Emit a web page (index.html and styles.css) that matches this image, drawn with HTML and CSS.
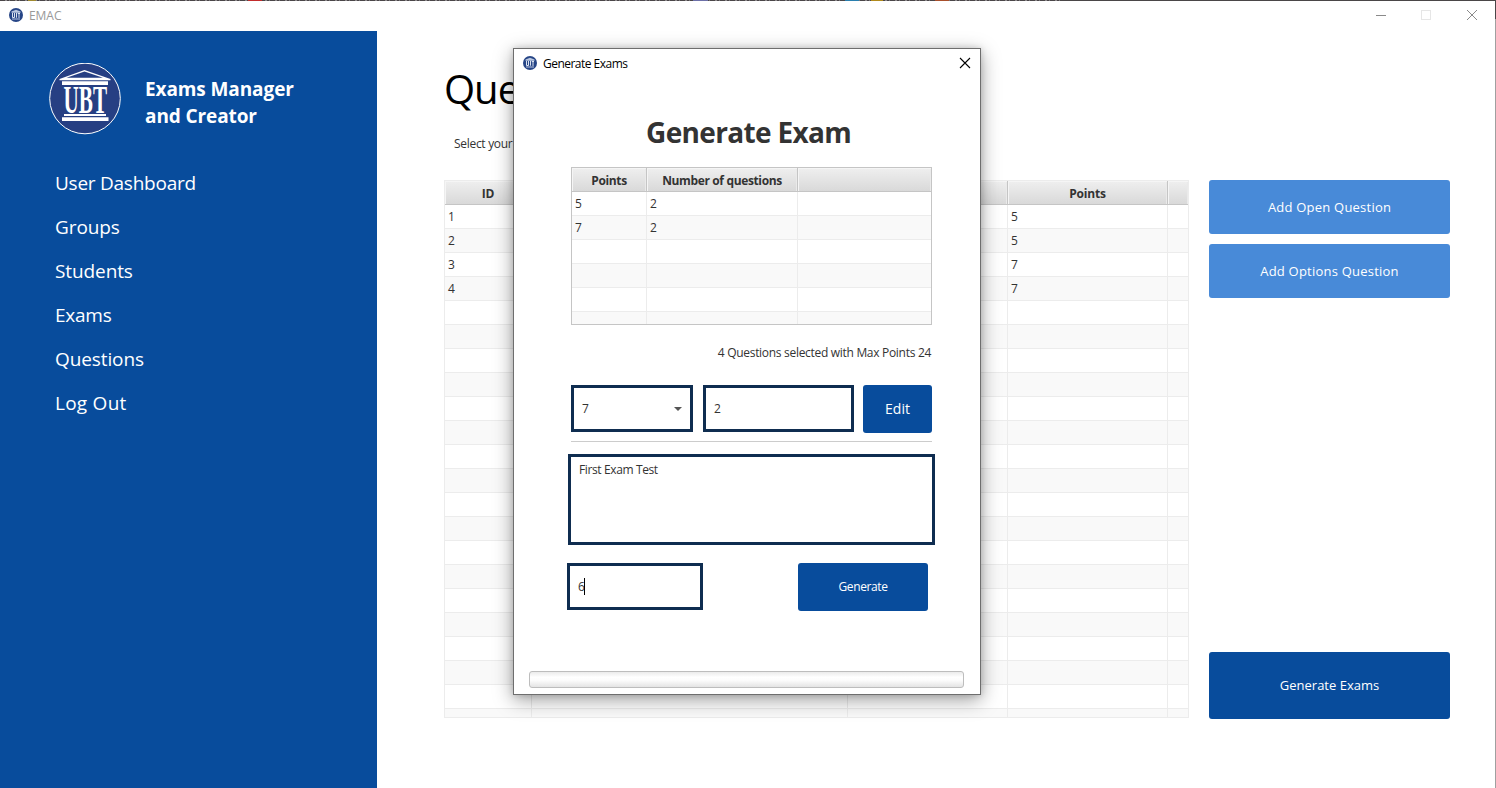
FILE: index.html
```
<!DOCTYPE html>
<html lang="en">
<head>
<meta charset="utf-8">
<title>EMAC</title>
<link rel="stylesheet" href="styles.css">
</head>
<body>
<svg width="0" height="0" class="defs">
  <symbol id="mini" viewBox="0 0 14 14">
    <circle cx="7" cy="7" r="7" fill="#264586"/>
    <path fill="#b9c6df" d="M2.500 3.600 7 1.800 11.500 3.600V4.800H2.500ZM3 10.400H11V11.600H3Z"/>
    <path stroke="#dbe3f0" fill="none" d="M3.500 5V9.500H5.500V5M7.500 4.800V9.700M8.800 5.500H11M10 5V10"/>
  </symbol>
</svg>
<div class="window">
  <header class="titlebar">
    <svg class="mini"><use href="#mini"/></svg>
    <span class="app-name">EMAC</span>
    <svg class="controls" width="104" height="12" viewBox="0 0 104 12" fill="none">
      <path stroke="#8a8a8a" d="M1 6.500H11"/>
      <rect x="46.500" y="1.500" width="9" height="9" stroke="#e6e6e6"/>
      <path stroke="#8a8a8a" d="M92 1 102 11M102 1 92 11"/>
    </svg>
  </header>
  <div class="content">
    <aside class="sidebar">
      <div class="brand">
        <svg class="logo" viewBox="0 0 72 72">
          <circle cx="36" cy="35.500" r="35.300" fill="#263f83" stroke="#fff" stroke-width="1"/>
          <path fill="#fff" fill-rule="evenodd" d="M10.500 16 35.500 7 61.500 16V17.300H10.500ZM17.500 14.800H54L35.500 8.600Z"/>
          <path fill="#fff" d="M13 18.200H59V22H13ZM15 51H57V53H15ZM13 54.200H59.500V58H13Z"/>
          <text x="14.500" y="49.700" class="logo-text" textLength="43.500" lengthAdjust="spacingAndGlyphs">UBT</text>
        </svg>
        <div class="brand-name">Exams Manager<br>and Creator</div>
      </div>
      <nav class="menu">
        <a class="wide">User Dashboard</a><a>Groups</a><a>Students</a><a class="wide">Exams</a><a>Questions</a><a class="loose">Log Out</a>
      </nav>
    </aside>
    <main class="main">
      <h1>Questions</h1>
      <p class="hint">Select your</p>
      <div class="body">
        <div class="table big">
          <div class="thead"><div>ID</div><div></div><div></div><div>Points</div><div></div></div>
          <div class="tr"><div>1</div><div></div><div></div><div>5</div><div></div></div>
          <div class="tr"><div>2</div><div></div><div></div><div>5</div><div></div></div>
          <div class="tr"><div>3</div><div></div><div></div><div>7</div><div></div></div>
          <div class="tr"><div>4</div><div></div><div></div><div>7</div><div></div></div>
          <div class="tr"><div></div><div></div><div></div><div></div><div></div></div>
          <div class="tr"><div></div><div></div><div></div><div></div><div></div></div>
          <div class="tr"><div></div><div></div><div></div><div></div><div></div></div>
          <div class="tr"><div></div><div></div><div></div><div></div><div></div></div>
          <div class="tr"><div></div><div></div><div></div><div></div><div></div></div>
          <div class="tr"><div></div><div></div><div></div><div></div><div></div></div>
          <div class="tr"><div></div><div></div><div></div><div></div><div></div></div>
          <div class="tr"><div></div><div></div><div></div><div></div><div></div></div>
          <div class="tr"><div></div><div></div><div></div><div></div><div></div></div>
          <div class="tr"><div></div><div></div><div></div><div></div><div></div></div>
          <div class="tr"><div></div><div></div><div></div><div></div><div></div></div>
          <div class="tr"><div></div><div></div><div></div><div></div><div></div></div>
          <div class="tr"><div></div><div></div><div></div><div></div><div></div></div>
          <div class="tr"><div></div><div></div><div></div><div></div><div></div></div>
          <div class="tr"><div></div><div></div><div></div><div></div><div></div></div>
          <div class="tr"><div></div><div></div><div></div><div></div><div></div></div>
          <div class="tr"><div></div><div></div><div></div><div></div><div></div></div>
          <div class="tr"><div></div><div></div><div></div><div></div><div></div></div>
        </div>
        <div class="actions">
          <div class="btn light">Add Open Question</div>
          <div class="btn light">Add Options Question</div>
          <div class="btn dark">Generate Exams</div>
        </div>
      </div>
    </main>
  </div>
</div>
<section class="dialog">
  <header class="dialog-bar">
    <svg class="mini"><use href="#mini"/></svg>
    <span class="dialog-title">Generate Exams</span>
    <svg class="close" width="12" height="12" viewBox="0 0 12 12"><path stroke="#000" stroke-width="1.100" d="M1 1 11 11M11 1 1 11"/></svg>
  </header>
  <h2>Generate Exam</h2>
  <div class="table small">
    <div class="thead"><div>Points</div><div>Number of questions</div><div></div></div>
    <div class="tr"><div>5</div><div>2</div><div></div></div>
    <div class="tr"><div>7</div><div>2</div><div></div></div>
    <div class="tr"><div></div><div></div><div></div></div>
    <div class="tr"><div></div><div></div><div></div></div>
    <div class="tr"><div></div><div></div><div></div></div>
    <div class="tr"><div></div><div></div><div></div></div>
  </div>
  <p class="summary">4 Questions selected with Max Points 24</p>
  <div class="edit-row">
    <div class="field combo">7<svg width="8" height="4" viewBox="0 0 8 4"><path fill="#555" d="M0 0H8L4 4Z"/></svg></div>
    <div class="field count">2</div>
    <div class="btn edit">Edit</div>
  </div>
  <div class="area">First Exam Test</div>
  <div class="gen-row">
    <div class="field number">6<i class="caret"></i></div>
    <div class="btn gen">Generate</div>
  </div>
  <div class="progress"></div>
</section>
</body>
</html>
```
FILE: styles.css
```
* { box-sizing: border-box; }
body { margin: 0; width: 1496px; height: 788px; overflow: hidden; font: 12px/16px "Open Sans", "Noto Sans", sans-serif; color: #333; background: #fff; }
h1, h2, p { margin: 0; }
.defs { position: absolute; }
.window {
  width: 1496px; height: 788px; padding: 1px 1px 0 0; display: flex; flex-direction: column;
  background:
    linear-gradient(90deg, transparent 28px, #a08a30 28px 36px, transparent 36px 248px, #c22c2c 248px 262px, transparent 262px 693px, #6d70a8 693px 708px, transparent 708px 845px, #2a7fae 845px 859px, transparent 859px 871px, #b08a1c 871px 883px, transparent 883px 935px, #a8502c 935px 949px, transparent 949px) 0 0 / 100% 1px no-repeat,
    repeating-linear-gradient(90deg, #4a4648 0 5px, #8b8789 5px 7px, #4a4648 7px 9px, #77757a 9px 10px) 0 0 / 1062px 1px no-repeat,
    linear-gradient(#4a4648, #4a4648) 0 0 / 100% 1px no-repeat,
    linear-gradient(#4a4648 19px, #a0a0a0 19px) 100% 0 / 1px 100% no-repeat,
    #fff;
}
.titlebar { height: 30px; flex: none; display: flex; align-items: center; padding: 0 16px 2px 9px; }
.mini { width: 14px; height: 14px; flex: none; }
.app-name { margin: 2px 0 0 6px; color: #999; letter-spacing: -.05px; }
.controls { margin-left: auto; }
.content { flex: 1; display: flex; min-height: 0; }
.sidebar { width: 377px; background: #084c9c; color: #fff; padding: 32px 0 0 49px; }
.brand { display: flex; gap: 24px; height: 72px; }
.logo { width: 72px; height: 72px; flex: none; }
.logo-text { font: bold 40px "Liberation Serif", serif; fill: #fff; }
.brand-name { font-size: 19px; font-weight: 700; line-height: 27px; padding-top: 13px; white-space: nowrap; letter-spacing: -.1px; }
.menu { display: flex; flex-direction: column; padding: 26px 0 0 6px; }
.menu a { height: 44px; line-height: 44px; font-size: 19px; letter-spacing: -.1px; }
.menu .wide { letter-spacing: -.25px; }
.menu .loose { letter-spacing: .25px; }
.main { flex: 1; padding: 29px 45px 0 67px; }
h1 { font-size: 40px; line-height: 58px; font-weight: 400; color: #000; letter-spacing: -1px; }
.hint { padding: 17px 0 0 10px; height: 62px; line-height: 18px; letter-spacing: -.3px; }
.body { display: flex; gap: 20px; }
.table { overflow: hidden; border: 1px solid #ececec; }
.thead, .tr { display: grid; }
.thead { height: 24px; grid-template-rows: 23px; background: #c5c5c5; font-weight: 700; text-align: center; letter-spacing: -.3px; }
.thead div { height: 23px; background: linear-gradient(#efefef, #d9d9d9); box-shadow: inset 1px 1px #f5f5f5, inset -1px 0 #eaeaea; border-right: 1px solid #c5c5c5; line-height: 25px; white-space: nowrap; }
.thead div:last-child, .tr div:last-child { border-right: 0; }
.tr { height: 24px; border-bottom: 1px solid #ececec; background: #fff; }
.tr:nth-child(odd) { background: #f9f9f9; }
.tr div { height: 23px; border-right: 1px solid #ececec; padding-left: 3px; line-height: 24px; }
.big { width: 745px; height: 538px; }
.big .thead, .big .tr { grid-template-columns: 87px 316px 160px 160px 20px; }
.big .thead { letter-spacing: -.2px; }
.small { width: 361px; height: 158px; border-color: #c5c5c5; margin: 18px 0 0 57px; }
.small .thead, .small .tr { grid-template-columns: 75px 151px 133px; }
.small .thead { letter-spacing: -.36px; }
.actions { width: 241px; height: 539px; display: flex; flex-direction: column; gap: 10px; }
.btn { display: flex; align-items: center; justify-content: center; border-radius: 3px; color: #fff; background: #084c9c; }
.actions .btn { height: 54px; font-size: 13px; }
.actions .light { background: #488ad8; letter-spacing: .22px; }
.actions .dark { height: 67px; margin-top: auto; padding-bottom: 2px; }
.dialog { position: absolute; left: 513px; top: 48px; width: 468px; height: 647px; background: #fff; border: 1px solid #6e6e6e; box-shadow: 0 5px 18px rgba(0,0,0,.38), 0 0 6px rgba(0,0,0,.15); }
.dialog-bar { height: 30px; display: flex; align-items: center; padding: 0 9px 2px; }
.dialog-title { color: #000; margin: 2px 0 0 6px; letter-spacing: -.52px; }
.close { margin-left: auto; }
h2 { margin: 34px 0 0 132px; height: 36px; line-height: 38px; font-size: 28px; font-weight: 700; letter-spacing: -.65px; white-space: nowrap; }
.summary { margin: 20px 49px 0 0; text-align: right; letter-spacing: -.3px; }
.edit-row { display: flex; margin: 24px 49px 0 57px; width: 361px; height: 57px; border-bottom: 1px solid #ccc; }
.field { height: 47px; border: 3px solid #0f2d50; display: flex; align-items: center; padding: 0 8px; }
.combo { width: 122px; justify-content: space-between; }
.count { width: 151px; margin: 0 9px 0 10px; }
.edit { width: 69px; height: 48px; font-size: 14px; }
.area { margin: 12px 0 0 54px; width: 367px; height: 91px; border: 3px solid #0f2d50; padding: 5px 8px; letter-spacing: -.38px; }
.gen-row { display: flex; justify-content: space-between; margin: 18px 52px 0 53px; }
.number { width: 136px; }
.caret { width: 1px; height: 17px; background: #000; margin-left: -1px; }
.gen { width: 130px; height: 48px; letter-spacing: -.4px; }
.progress { margin: 60px 0 0 15px; width: 435px; height: 17px; border: 1px solid #bdbdbd; border-radius: 3px; background: linear-gradient(#ebebeb, #fff 35%, #fcfcfc 55%, #e4e4e4); }
```
